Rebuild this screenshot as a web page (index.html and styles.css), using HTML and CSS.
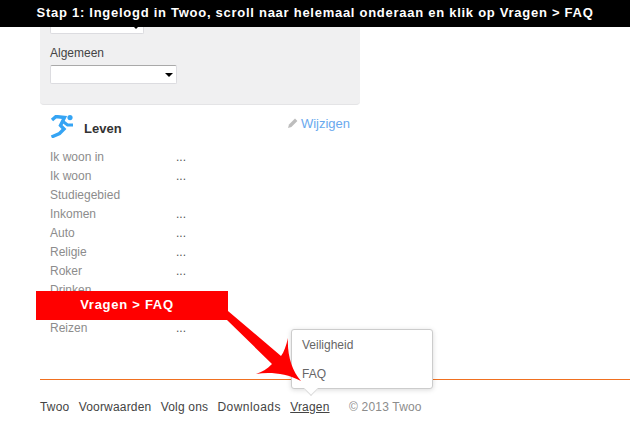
FILE: index.html
```html
<!DOCTYPE html>
<html lang="nl">
<head>
<meta charset="utf-8">
<title>Stap 1</title>
<link rel="stylesheet" href="styles.css">
</head>
<body>
<div class="page">
  <div class="content">
    <section class="panel">
      <div class="select select-cut"><span class="caret"></span></div>
      <div class="panel-label">Algemeen</div>
      <div class="select"><span class="caret"></span></div>
    </section>
    <section class="life">
      <header class="life-head">
        <div class="life-title">
          <svg class="runner" width="23" height="23" viewBox="0 0 23 23">
            <circle cx="20" cy="2.6" r="2.6" fill="#35a4f4"/>
            <path d="M2 5 L6 1.5 L14.5 2.5 L10.5 10.5 L14 14 L9.5 18.5 L1.5 22" fill="none" stroke="#35a4f4" stroke-width="3.4"/>
            <path d="M13 6.5 L17.5 10 L23 10" fill="none" stroke="#35a4f4" stroke-width="3"/>
          </svg>
          <h2 class="life-name">Leven</h2>
        </div>
        <a class="edit">
          <svg class="pencil" width="10" height="10" viewBox="0 0 10 10"><path d="M0 10 L1 6.6 L7 .6 L9.4 3 L3.4 9 Z" fill="#bdbdbd"/></svg>Wijzigen
        </a>
      </header>
      <dl class="facts">
        <div class="fact"><dt>Ik woon in</dt><dd>...</dd></div>
        <div class="fact"><dt>Ik woon</dt><dd>...</dd></div>
        <div class="fact"><dt>Studiegebied</dt><dd></dd></div>
        <div class="fact"><dt>Inkomen</dt><dd>...</dd></div>
        <div class="fact"><dt>Auto</dt><dd>...</dd></div>
        <div class="fact"><dt>Religie</dt><dd>...</dd></div>
        <div class="fact"><dt>Roker</dt><dd>...</dd></div>
        <div class="fact"><dt>Drinken</dt><dd></dd></div>
        <div class="fact"><dt>&nbsp;</dt><dd></dd></div>
        <div class="fact"><dt>Reizen</dt><dd>...</dd></div>
      </dl>
    </section>
  </div>
  <footer class="footer">
    <a>Twoo</a><a>Voorwaarden</a><a>Volg ons</a><a class="wide">Downloads</a><a class="active">Vragen</a><span class="copy">© 2013 Twoo</span>
  </footer>
</div>

<div class="banner">Stap 1: Ingelogd in Twoo, scroll naar helemaal onderaan en klik op Vragen &gt; FAQ</div>

<div class="popup">
  <div class="popup-item">Veiligheid</div>
  <div class="popup-item">FAQ</div>
  <span class="popup-tip"></span>
</div>

<svg class="arrow" width="90" height="85" viewBox="0 0 90 85">
  <path d="M0 10 L8 6 L61 51 C64 47 66 41 68 33 C67 50 72 66 81 76 C65 68 50 67 36 69 C42 67 47 64 52 59 L7 15 Z" fill="#ff0000"/>
</svg>
<div class="callout">Vragen &gt; FAQ</div>
</body>
</html>
```
FILE: styles.css
```css
html, body { margin: 0; padding: 0; }
body {
  width: 630px;
  height: 423px;
  overflow: hidden;
  position: relative;
  background: #fff;
  font-family: "Liberation Sans", Arial, sans-serif;
  font-size: 12px;
  color: #333;
}
.content { width: 320px; margin-left: 40px; }
.panel {
  box-sizing: border-box;
  height: 105px;
  background: #f0f0f1;
  border-bottom: 1px solid #e4e4e6;
  border-radius: 0 0 4px 4px;
  padding: 17px 10px 0;
}
.select {
  position: relative;
  box-sizing: border-box;
  width: 127px;
  height: 19px;
  background: #fff;
  border: 1px solid #dcdce0;
  border-top-color: #a9a9a9;
  border-radius: 2px;
}
.select-cut { width: 94px; height: 17px; margin-bottom: 11px; }
.caret {
  position: absolute;
  right: 3px;
  top: 7px;
  border: 4px solid transparent;
  border-top-color: #000;
  border-bottom: 0;
}
.panel-label { font-size: 12px; line-height: 16px; margin-bottom: 4px; color: #444; }
.life { padding: 9px 10px 0; }
.life-head { display: flex; justify-content: space-between; align-items: flex-start; height: 34px; }
.life-title { display: flex; align-items: flex-start; }
.runner { display: block; margin-top: 1px; }
.life-name { margin: 7px 0 0 11px; font-size: 13px; line-height: 16px; font-weight: bold; color: #333; }
.edit { color: #6aa9ee; font-size: 13px; line-height: 16px; margin-top: 2px; }
.pencil { margin-right: 3px; }
.facts { margin: 0; }
.fact { display: flex; height: 19px; line-height: 19px; }
.fact dt { width: 126px; color: #8c8c8c; }
.fact dd { margin: 0; color: #555; }
.footer {
  position: absolute;
  left: 40px;
  right: 0;
  top: 379px;
  border-top: 1px solid #f07020;
  padding-top: 19px;
  display: flex;
  line-height: 16px;
  color: #444;
  letter-spacing: .18px;
}
.footer a { margin-right: 9.3px; }
.footer .wide { letter-spacing: .45px; }
.footer .active { text-decoration: underline; margin-right: 19.5px; }
.copy { color: #8c8c8c; }
.banner {
  position: absolute;
  left: 0; top: 0; right: 0;
  height: 27px;
  line-height: 25px;
  background: #000;
  color: #fff;
  font-weight: bold;
  font-size: 13px;
  letter-spacing: .73px;
  text-align: center;
}
.popup {
  position: absolute;
  left: 291px;
  top: 329px;
  box-sizing: border-box;
  width: 142px;
  height: 60px;
  background: #fff;
  border: 1px solid #ccc;
  border-radius: 3px;
  box-shadow: 0 1px 5px rgba(0,0,0,.15);
  padding: 6px 10px;
}
.popup-item { height: 29px; line-height: 18px; color: #666; }
.popup-tip {
  position: absolute;
  left: 14px;
  bottom: -6px;
  width: 9px;
  height: 9px;
  background: #fff;
  border-right: 1px solid #ddd;
  border-bottom: 1px solid #ddd;
  transform: rotate(45deg);
}
.arrow { position: absolute; left: 220px; top: 305px; }
.callout {
  position: absolute;
  left: 36px;
  top: 291px;
  box-sizing: border-box;
  width: 192px;
  height: 29px;
  padding-right: 10px;
  line-height: 28px;
  background: #f00;
  color: #fff;
  font-weight: bold;
  font-size: 13px;
  letter-spacing: .73px;
  text-align: center;
}
```
